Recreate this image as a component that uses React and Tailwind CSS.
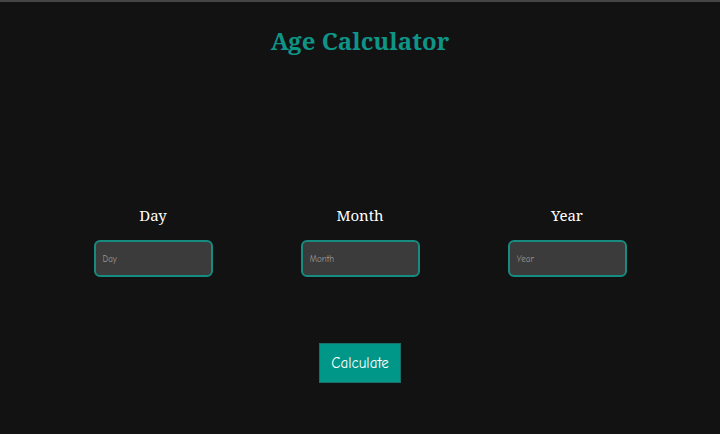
const fields = ["Day", "Month", "Year"];

const App = () => {
  return (
    <div className="h-[434px] w-[720px] bg-[#121212] border-t-2 border-[#454545] overflow-hidden" style={{ fontFamily: '"Noto Serif", "DejaVu Serif", serif' }}>
      <h1 className="text-center text-[24px] font-bold text-[#0f9488] mt-[24px] leading-[30px]">
        Age Calculator
      </h1>

      <div className="mx-auto w-[621px] grid grid-cols-3 mt-[150px]">
        {fields.map((f) => (
          <div key={f} className="flex flex-col items-center">
            <label className="text-white text-[15px] leading-[18px]">{f}</label>
            <input
              placeholder={f}
              className="mt-[16px] w-[119px] h-[37px] rounded-[6px] border-2 border-[#168b80] bg-[#3b3b3b] px-[7px] text-[9px] text-white placeholder:text-[#9a9a9a] outline-none"
              style={{ fontFamily: '"Comic Neue", "DejaVu Sans", sans-serif' }}
            />
          </div>
        ))}
      </div>

      <div className="flex justify-center mt-[66px]">
        <button
          className="w-[82px] h-[40px] bg-[#009688] border border-[#19706a] text-white text-[15px]"
          style={{ fontFamily: '"Comic Neue", "DejaVu Sans", sans-serif' }}
        >
          Calculate
        </button>
      </div>
    </div>
  );
};

export default App;
